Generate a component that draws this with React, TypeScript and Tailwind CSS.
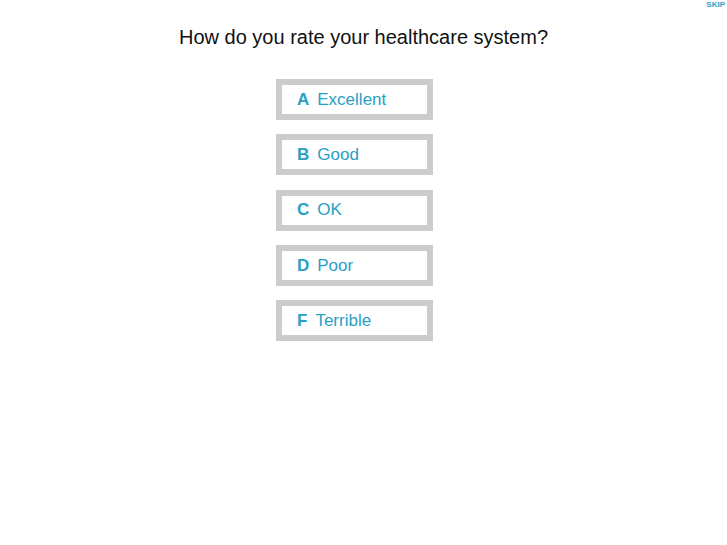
const OPTIONS = [
  { key: "A", label: "Excellent" },
  { key: "B", label: "Good" },
  { key: "C", label: "OK" },
  { key: "D", label: "Poor" },
  { key: "F", label: "Terrible" },
];

export default function App() {
  return (
    <div className="relative w-[727px] h-[545px] bg-white font-['Liberation_Sans',Arial,sans-serif]">
      <a className="absolute right-[2px] top-0 text-[8px] leading-[10px] font-bold text-[#2aa3c8]">SKIP</a>
      <div className="pt-[25px] flex flex-col items-center">
        <h1 className="text-[20px] leading-[24px] text-[#111]">How do you rate your healthcare system?</h1>
        <div className="mt-[30px] mr-[18px] flex flex-col gap-[14.3px]">
          {OPTIONS.map(o => (
            <button
              key={o.key}
              className="w-[157px] h-[41px] border-[6px] border-[#cccccc] bg-white flex items-center pl-[15px] text-[17px] text-[#29a0c4]"
            >
              <span className="font-bold mr-[8px]">{o.key}</span>
              <span>{o.label}</span>
            </button>
          ))}
        </div>
      </div>
    </div>
  );
}
